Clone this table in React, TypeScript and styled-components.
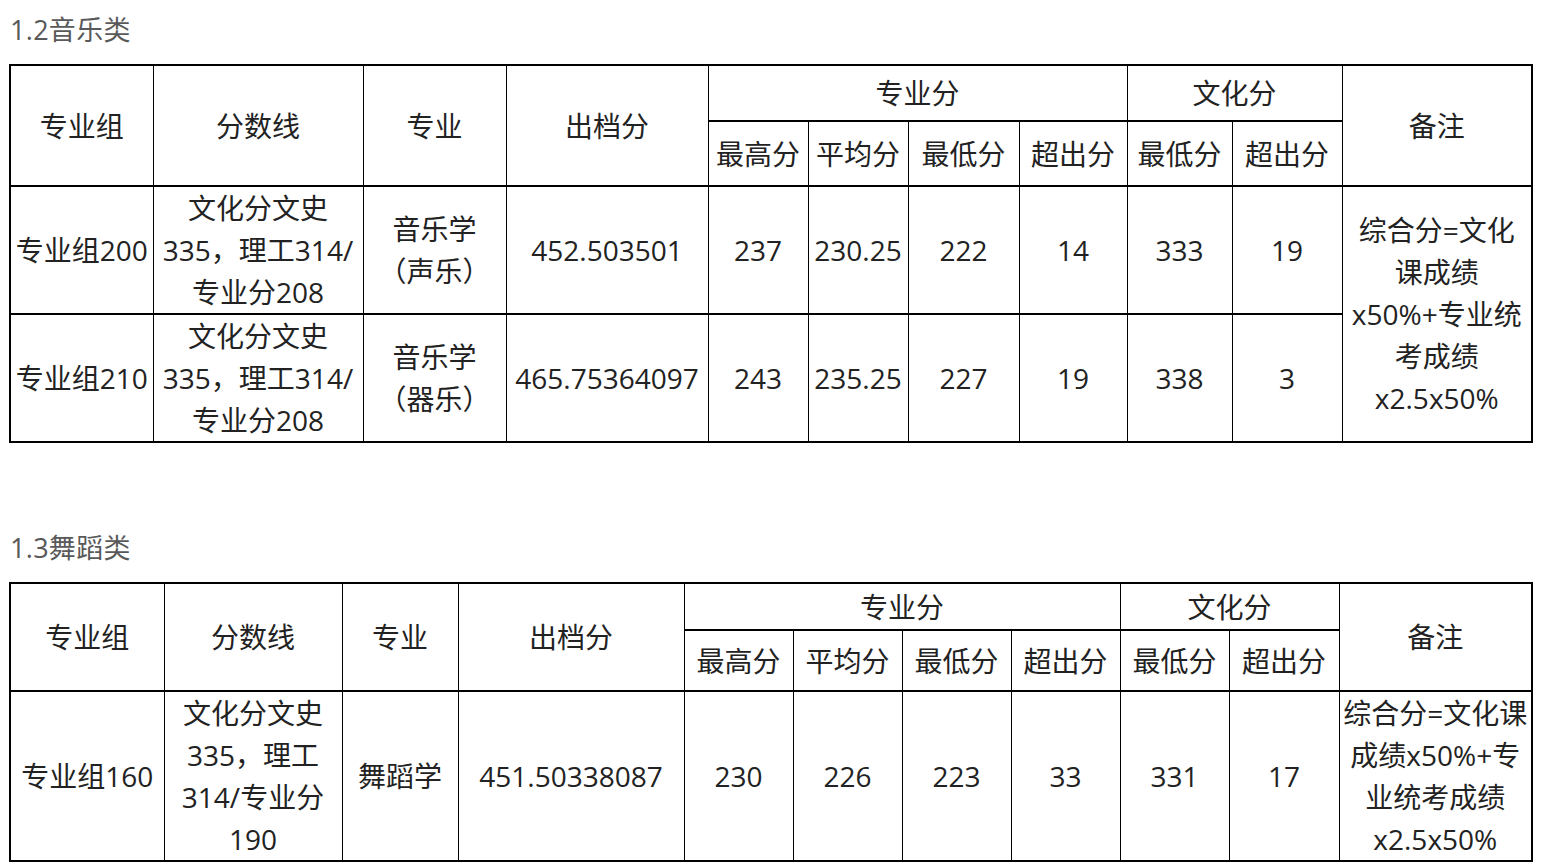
import styled, { createGlobalStyle } from 'styled-components';

const GlobalStyle = createGlobalStyle`
  body {
    margin: 0;
    background: #fff;
    font-family: 'Open Sans', 'Noto Sans CJK SC', sans-serif;
  }
`;

interface ScoreRow {
  group: string;
  line: string[];
  major: string[];
  score: string;
  pro: string[];
  culture: string[];
}

interface Section {
  title: string;
  cols: number[];
  headTop: number;
  headSub: number;
  rowHeight: number;
  gapTop: number;
  rows: ScoreRow[];
  note: string[];
}

const sections: Section[] = [
  {
    title: '1.2音乐类',
    cols: [143, 210, 143, 202, 100, 100, 111, 108, 105, 110, 190],
    headTop: 56,
    headSub: 65,
    rowHeight: 127,
    gapTop: 0,
    rows: [
      {
        group: '专业组200',
        line: ['文化分文史', '335，理工314/', '专业分208'],
        major: ['音乐学', '（声乐）'],
        score: '452.503501',
        pro: ['237', '230.25', '222', '14'],
        culture: ['333', '19'],
      },
      {
        group: '专业组210',
        line: ['文化分文史', '335，理工314/', '专业分208'],
        major: ['音乐学', '（器乐）'],
        score: '465.75364097',
        pro: ['243', '235.25', '227', '19'],
        culture: ['338', '3'],
      },
    ],
    note: ['综合分=文化', '课成绩', 'x50%+专业统', '考成绩', 'x2.5x50%'],
  },
  {
    title: '1.3舞蹈类',
    cols: [154, 178, 116, 226, 109, 109, 109, 109, 109, 110, 193],
    headTop: 47,
    headSub: 61,
    rowHeight: 170,
    gapTop: 85,
    rows: [
      {
        group: '专业组160',
        line: ['文化分文史', '335，理工', '314/专业分', '190'],
        major: ['舞蹈学'],
        score: '451.50338087',
        pro: ['230', '226', '223', '33'],
        culture: ['331', '17'],
      },
    ],
    note: ['综合分=文化课', '成绩x50%+专', '业统考成绩', 'x2.5x50%'],
  },
];

const Lines = ({ items }: { items: string[] }) => (
  <>
    {items.map((t, i) => (
      <Line key={i}>{t}</Line>
    ))}
  </>
);

const ScoreTable = ({ section }: { section: Section }) => (
  <Block $gap={section.gapTop}>
    <Title>{section.title}</Title>
    <Table>
      <colgroup>
        {section.cols.map((w, i) => (
          <col key={i} style={{ width: w }} />
        ))}
      </colgroup>
      <thead>
        <Row $h={section.headTop}>
          <Cell rowSpan={2}>专业组</Cell>
          <Cell rowSpan={2}>分数线</Cell>
          <Cell rowSpan={2}>专业</Cell>
          <Cell rowSpan={2}>出档分</Cell>
          <Cell colSpan={4}>专业分</Cell>
          <Cell colSpan={2}>文化分</Cell>
          <Cell rowSpan={2}>备注</Cell>
        </Row>
        <Row $h={section.headSub}>
          <Cell>最高分</Cell>
          <Cell>平均分</Cell>
          <Cell>最低分</Cell>
          <Cell>超出分</Cell>
          <Cell>最低分</Cell>
          <Cell>超出分</Cell>
        </Row>
      </thead>
      <tbody>
        {section.rows.map((r, i) => (
          <Row key={r.group} $h={section.rowHeight}>
            <Cell>{r.group}</Cell>
            <Cell>
              <Lines items={r.line} />
            </Cell>
            <Cell>
              <Lines items={r.major} />
            </Cell>
            <Cell>{r.score}</Cell>
            {r.pro.map((v, j) => (
              <Cell key={'p' + j}>{v}</Cell>
            ))}
            {r.culture.map((v, j) => (
              <Cell key={'c' + j}>{v}</Cell>
            ))}
            {i === 0 && (
              <Cell rowSpan={section.rows.length}>
                <Lines items={section.note} />
              </Cell>
            )}
          </Row>
        ))}
      </tbody>
    </Table>
  </Block>
);

const App = () => (
  <Page>
    <GlobalStyle />
    {sections.map((s) => (
      <ScoreTable key={s.title} section={s} />
    ))}
  </Page>
);

const Page = styled.div`
  padding: 10px 10px 0 9px;
  width: 1522px;
`;

const Block = styled.section<{ $gap: number }>`
  margin-top: ${(p) => p.$gap}px;
`;

const Title = styled.div`
  height: 40px;
  padding: 0 0 14px 1px;
  font-size: 27px;
  line-height: 40px;
  color: #595959;
  letter-spacing: 0.3px;
`;

const Table = styled.table`
  width: 1522px;
  table-layout: fixed;
  border-collapse: collapse;
  border: 2px solid #000;
  color: #222;
  font-size: 28px;
`;

const Row = styled.tr<{ $h: number }>`
  height: ${(p) => p.$h}px;
`;

const Cell = styled.td`
  border-top: 2px solid #000;
  border-bottom: 2px solid #000;
  border-left: 1px solid #000;
  border-right: 1px solid #000;
  padding: 0;
  text-align: center;
  vertical-align: middle;
  line-height: 42px;
  white-space: nowrap;
  overflow: hidden;
`;

const Line = styled.div`
  line-height: 42px;
`;

export default App;
